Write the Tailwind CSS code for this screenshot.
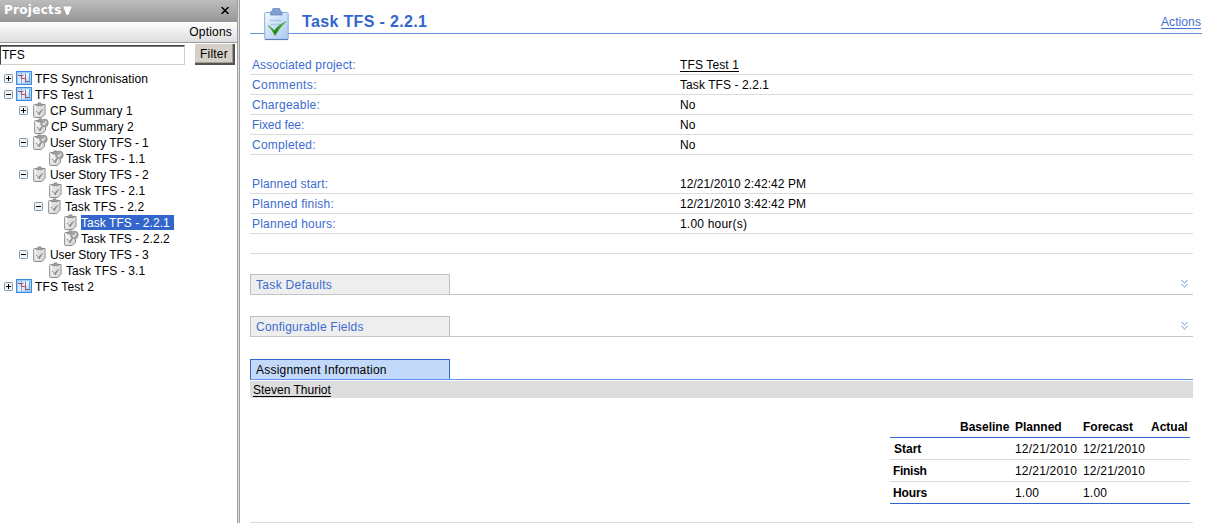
<!DOCTYPE html>
<html lang="en">
<head>
<meta charset="utf-8">
<title>Task TFS - 2.2.1</title>
<script src="https://cdn.jsdelivr.net/npm/@tailwindcss/browser@4"></script>
</head>
<body class="h-[523px] w-[1224px] overflow-hidden bg-white text-black text-[12px] leading-4 font-['Liberation_Sans',Arial,sans-serif]">
<svg width="0" height="0" class="absolute">
  <defs>
    <linearGradient id="pg" x1="0" y1="0" x2="1" y2="1"><stop offset="0" stop-color="#a3cdf9"/><stop offset=".5" stop-color="#eaf4ff"/><stop offset="1" stop-color="#7fb8f5"/></linearGradient>
    <linearGradient id="cg" x1="0" y1="0" x2="1" y2="1"><stop offset="0" stop-color="#fff"/><stop offset="1" stop-color="#cfcfcf"/></linearGradient>
    <linearGradient id="bg" x1="0" y1="0" x2="1" y2="1"><stop offset="0" stop-color="#f2f8fe"/><stop offset="1" stop-color="#a9c8ee"/></linearGradient>
    <linearGradient id="tg" x1="0" y1="0" x2="1" y2="0"><stop offset="0" stop-color="#7ecb4c"/><stop offset=".4" stop-color="#1f7f1c"/><stop offset="1" stop-color="#66c23c"/></linearGradient>
    <symbol id="plus" viewBox="0 0 9 9"><rect x=".5" y=".5" width="8" height="8" rx=".8" fill="#f3f2ee" stroke="#7b9ab5"/><path d="M2 4.5h5M4.5 2v5" stroke="#000"/></symbol>
    <symbol id="minus" viewBox="0 0 9 9"><rect x=".5" y=".5" width="8" height="8" rx=".8" fill="#f3f2ee" stroke="#7b9ab5"/><path d="M2 4.5h5" stroke="#000"/></symbol>
    <symbol id="proj" viewBox="0 0 16 14"><rect x=".5" y=".5" width="15" height="13" fill="url(#pg)" stroke="#3f8ade"/><rect x="1.500" y="1.500" width="13" height="11" fill="none" stroke="#9fcbf8"/><path d="M5.500 2v10M9.500 2v10M13.500 2v10" stroke="#6aa6ec"/><path d="M2 4.500h3.500v3H9.500v3H13" fill="none" stroke="#b04a48"/><path d="M9.500 4v3M6 4.500h1.500" stroke="#c0524c" stroke-width=".8"/></symbol>
    <symbol id="clip" viewBox="0 0 13 16"><path d="M1.500 2.500h10.500v9.800l-3.200 3.200H1.500q-.8 0-.8-.8V3.300q0-.8.8-.8z" fill="url(#cg)" stroke="#8b8b8b"/><path d="M3.200 4V2.200h1.500L5.200.8h2.600l.5 1.400h1.500V4z" fill="#9b9b9b" stroke="#888" stroke-width=".6"/><path d="M3.500 6.500h6M3.500 8.500h5" stroke="#d2d2d2"/><path d="M3 9q2 1 2.700 2.600Q7 8.800 10 7.300 7.800 10 6.200 13 5 10.700 3 9z" fill="#808080" stroke="#8b8b8b" stroke-width=".6"/></symbol>
    <symbol id="clipdone" viewBox="0 0 15 16"><path d="M1.500 2.500h10v9.800l-3.200 3.200H1.500q-.8 0-.8-.8V3.300q0-.8.8-.8z" fill="url(#cg)" stroke="#8b8b8b"/><path d="M3 4V2.200H4.500L5 .8h2.500l.5 1.400h1.500V4z" fill="#9b9b9b" stroke="#888" stroke-width=".6"/><path d="M2.800 9q2 1 2.700 2.600Q6.800 8.800 9.800 7.300 7.600 10 6 13 4.800 10.700 2.800 9z" fill="#808080" stroke="#8b8b8b" stroke-width=".6"/><circle cx="10.400" cy="4.900" r="3.900" fill="#a3a3a3" stroke="#929292" stroke-width=".7"/><path d="M8.600 5.100l1.400 1.500 2.200-3.200" fill="none" stroke="#f0f0f0" stroke-width="1.200"/></symbol>
    <symbol id="more" viewBox="0 0 7 8" shape-rendering="crispEdges"><path d="M0 0h2v1H0zM5 0h2v1H5zM1 1h2v1H1zM4 1h2v1H4zM2 2h3v1H2zM3 3h1v1H3zM0 4h2v1H0zM5 4h2v1H5zM1 5h2v1H1zM4 5h2v1H4zM2 6h3v1H2zM3 7h1v1H3z" fill="#b3c8f0"/></symbol>
  </defs>
</svg>
<div class="flex h-full">
  <aside class="w-[237px] shrink-0">
    <header class="flex h-[22px] items-start justify-between bg-gradient-to-b from-[#bdbdbd] to-[#969696] pl-1 pr-[8px] text-white">
      <h2 class="flex items-center pt-[2px] font-['DejaVu_Sans',Verdana,sans-serif] text-[12px] font-bold tracking-[0.3px]">Projects<svg class="ml-px" width="9" height="9" viewBox="0 0 9 9"><path d="M.3.500h8.400L5.500 8.700h-2z" fill="#fff"/></svg></h2>
      <svg class="mt-[7px]" width="8" height="7" viewBox="0 0 8 7"><path d="M.5 0l7 7M7.500 0l-7 7" stroke="#000" stroke-width="1.500"/></svg>
    </header>
    <div class="flex h-[21px] justify-end border-b border-[#9c9c9c] bg-gradient-to-b from-[#fdfdfd] to-[#dedede] pr-[5px] pt-[2px]"><span class="tracking-[0.2px]">Options</span></div>
    <div class="flex h-[27px] justify-between pr-[2px] pt-px">
      <div class="mt-px h-[20px] w-[185px] border border-b-[#d4d0c8] border-l-[#404040] border-r-[#d4d0c8] border-t-[#404040] pl-px pt-px shadow-[inset_0_1px_0_#808080]">TFS</div>
      <button class="h-[21px] w-[40px] border-b-2 border-r-2 border-b-[#55534f] border-r-[#55534f] bg-[#d4d0c8] text-[12px] leading-[18px] tracking-[0.2px] shadow-[inset_-1px_-1px_0_#a09d97]">Filter</button>
    </div>
    <ul>
      <li class="flex h-4 items-center pl-1"><svg width="9" height="9"><use href="#plus"/></svg><svg class="ml-[3px]" width="16" height="14"><use href="#proj"/></svg><span class="ml-[3px] pt-[2px] tracking-[0.08px]">TFS Synchronisation</span></li>
      <li class="flex h-4 items-center pl-1"><svg width="9" height="9"><use href="#minus"/></svg><svg class="ml-[3px]" width="16" height="14"><use href="#proj"/></svg><span class="ml-[3px] pt-[2px] tracking-[0.1px]">TFS Test 1</span></li>
      <li class="flex h-4 items-center pl-[19px]"><svg width="9" height="9"><use href="#plus"/></svg><svg class="ml-[5px]" width="13" height="16"><use href="#clip"/></svg><span class="ml-[4px] pt-[2px] tracking-[0.15px]">CP Summary 1</span></li>
      <li class="flex h-4 items-center pl-[34px]"><svg width="15" height="16"><use href="#clipdone"/></svg><span class="ml-[2px] pt-[2px] tracking-[0.15px]">CP Summary 2</span></li>
      <li class="flex h-4 items-center pl-[19px]"><svg width="9" height="9"><use href="#minus"/></svg><svg class="ml-[5px]" width="15" height="16"><use href="#clipdone"/></svg><span class="ml-[2px] pt-[2px] tracking-[-0.06px]">User Story TFS - 1</span></li>
      <li class="flex h-4 items-center pl-[49px]"><svg width="15" height="16"><use href="#clipdone"/></svg><span class="ml-[2px] pt-[2px] tracking-[0.1px]">Task TFS - 1.1</span></li>
      <li class="flex h-4 items-center pl-[19px]"><svg width="9" height="9"><use href="#minus"/></svg><svg class="ml-[5px]" width="13" height="16"><use href="#clip"/></svg><span class="ml-[4px] pt-[2px] tracking-[-0.06px]">User Story TFS - 2</span></li>
      <li class="flex h-4 items-center pl-[49px]"><svg width="13" height="16"><use href="#clip"/></svg><span class="ml-[4px] pt-[2px] tracking-[0.1px]">Task TFS - 2.1</span></li>
      <li class="flex h-4 items-center pl-[34px]"><svg width="9" height="9"><use href="#minus"/></svg><svg class="ml-[5px]" width="13" height="16"><use href="#clip"/></svg><span class="ml-[4px] pt-[2px] tracking-[0.1px]">Task TFS - 2.2</span></li>
      <li class="flex h-4 items-center pl-[64px]"><svg width="13" height="16"><use href="#clip"/></svg><span class="ml-[4px] h-[15px] w-[93px] bg-[#3366cc] leading-4 tracking-[0.06px] text-white">Task TFS - 2.2.1</span></li>
      <li class="flex h-4 items-center pl-[64px]"><svg width="15" height="16"><use href="#clipdone"/></svg><span class="ml-[2px] pt-[2px] tracking-[0.06px]">Task TFS - 2.2.2</span></li>
      <li class="flex h-4 items-center pl-[19px]"><svg width="9" height="9"><use href="#minus"/></svg><svg class="ml-[5px]" width="13" height="16"><use href="#clip"/></svg><span class="ml-[4px] pt-[2px] tracking-[-0.06px]">User Story TFS - 3</span></li>
      <li class="flex h-4 items-center pl-[49px]"><svg width="13" height="16"><use href="#clip"/></svg><span class="ml-[4px] pt-[2px] tracking-[0.1px]">Task TFS - 3.1</span></li>
      <li class="flex h-4 items-center pl-1"><svg width="9" height="9"><use href="#plus"/></svg><svg class="ml-[3px]" width="16" height="14"><use href="#proj"/></svg><span class="ml-[3px] pt-[2px] tracking-[0.12px]">TFS Test 2</span></li>
    </ul>
  </aside>
  <div class="w-[3px] shrink-0 border-x border-[#a0a0a0] bg-[#dedede]"></div>
  <main class="w-[962px] shrink-0 pl-[10px]">
    <header class="relative flex h-[34px] items-start border-b border-[#6b93dd]">
      <svg class="absolute left-[14px] top-[8px]" width="25" height="33" viewBox="0 0 25 33">
        <rect x=".7" y="4.500" width="23.500" height="27" rx="1" fill="url(#bg)" stroke="#8aadde"/>
        <path d="M1 31.500h23" stroke="#5a7db8" stroke-width="1.200"/>
        <path d="M6.500 7V4.200q0-1 1-1h1V1.500q0-1 1-1h5.500q1 0 1 1v1.700h1q1 0 1 1V7z" fill="#809fd0" stroke="#6b8cc2" stroke-width=".8"/>
        <path d="M6 12.500h12M6 16.500h12" stroke="#a4c8ee" stroke-width="1.500"/>
        <path d="M4 17.500q3.500 2 6.200 5Q14.500 17 21.800 13.500 15 20 11 27.500 8 21.500 4 17.500z" fill="url(#tg)" stroke="#3b9a2c" stroke-width=".6"/>
      </svg>
      <h1 class="ml-[52px] mt-[12px] text-[16px] font-bold leading-[20px] tracking-[0.35px] text-[#3366cc]">Task TFS - 2.2.1</h1>
      <a class="ml-auto mr-px mt-[14px] tracking-[0.1px] text-[#4470d0] underline underline-offset-2">Actions</a>
    </header>
    <div class="w-[943px]">
      <dl class="mt-[21px]">
        <div class="flex h-[20px] border-b border-[#dcdcdc] pl-[2px] pt-[2px]"><dt class="w-[428px] text-[#3d6bd0] tracking-[0.12px]">Associated project:</dt><dd class="tracking-[0.12px] underline underline-offset-2">TFS Test 1</dd></div>
        <div class="flex h-[20px] border-b border-[#dcdcdc] pl-[2px] pt-[2px]"><dt class="w-[428px] text-[#3d6bd0] tracking-[0.4px]">Comments:</dt><dd class="tracking-[0.08px]">Task TFS - 2.2.1</dd></div>
        <div class="flex h-[20px] border-b border-[#dcdcdc] pl-[2px] pt-[2px]"><dt class="w-[428px] text-[#3d6bd0] tracking-[0.25px]">Chargeable:</dt><dd>No</dd></div>
        <div class="flex h-[20px] border-b border-[#dcdcdc] pl-[2px] pt-[2px]"><dt class="w-[428px] text-[#3d6bd0] tracking-[-0.05px]">Fixed fee:</dt><dd>No</dd></div>
        <div class="flex h-[20px] border-b border-[#dcdcdc] pl-[2px] pt-[2px]"><dt class="w-[428px] text-[#3d6bd0] tracking-[0.25px]">Completed:</dt><dd>No</dd></div>
      </dl>
      <dl class="mt-[19px]">
        <div class="flex h-[20px] border-b border-[#dcdcdc] pl-[2px] pt-[2px]"><dt class="w-[428px] text-[#3d6bd0] tracking-[0.15px]">Planned start:</dt><dd class="tracking-[0.06px]">12/21/2010 2:42:42 PM</dd></div>
        <div class="flex h-[20px] border-b border-[#dcdcdc] pl-[2px] pt-[2px]"><dt class="w-[428px] text-[#3d6bd0] tracking-[0.22px]">Planned finish:</dt><dd class="tracking-[0.06px]">12/21/2010 3:42:42 PM</dd></div>
        <div class="flex h-[20px] border-b border-[#dcdcdc] pl-[2px] pt-[2px]"><dt class="w-[428px] text-[#3d6bd0] tracking-[0.22px]">Planned hours:</dt><dd class="tracking-[0.2px]">1.00 hour(s)</dd></div>
        <div class="h-[20px] border-b border-[#dcdcdc]"></div>
      </dl>
      <section class="mt-[20px] flex h-[21px] items-start justify-between border-b border-[#c4c4c4]">
        <h3 class="h-[20px] w-[200px] border border-b-0 border-[#c0c0c0] bg-[#eeeeee] pl-[5px] pt-[2px] tracking-[0.32px] text-[#3d6bd0]">Task Defaults</h3>
        <svg class="mr-[5px] mt-[6px]" width="7" height="8"><use href="#more"/></svg>
      </section>
      <section class="mt-[21px] flex h-[21px] items-start justify-between border-b border-[#c4c4c4]">
        <h3 class="h-[20px] w-[200px] border border-b-0 border-[#c0c0c0] bg-[#eeeeee] pl-[5px] pt-[2px] tracking-[0.23px] text-[#3d6bd0]">Configurable Fields</h3>
        <svg class="mr-[5px] mt-[6px]" width="7" height="8"><use href="#more"/></svg>
      </section>
      <section class="mt-[22px]">
        <div class="h-[21px] border-b border-[#6495e6]"><h3 class="h-[20px] w-[200px] border border-b-0 border-[#3366cc] bg-[#c3d9fa] pl-[5px] pt-[2px] tracking-[0.21px]">Assignment Information</h3></div>
        <div class="mt-px h-[17px] bg-[#dddddd] pl-[3px] pt-px leading-[16px]"><a class="underline underline-offset-2">Steven Thuriot</a></div>
      </section>
      <div class="flex h-[125px] justify-end border-b border-[#dcdcdc] pr-[3px] pt-[18px]">
        <div class="w-[300px]">
          <div class="grid h-[22px] grid-cols-[70px_55px_68px_68px_39px] border-b border-[#3366cc] pt-[3px] font-bold"><span></span><span>Baseline</span><span>Planned</span><span>Forecast</span><span>Actual</span></div>
          <div class="grid h-[22px] grid-cols-[70px_55px_68px_68px_39px] border-b border-[#dcdcdc] pt-[3px]"><span class="pl-[4px] font-bold">Start</span><span></span><span class="tracking-[0.2px]">12/21/2010</span><span class="tracking-[0.2px]">12/21/2010</span></div>
          <div class="grid h-[22px] grid-cols-[70px_55px_68px_68px_39px] border-b border-[#dcdcdc] pt-[3px]"><span class="pl-[3px] font-bold tracking-[-0.3px]">Finish</span><span></span><span class="tracking-[0.2px]">12/21/2010</span><span class="tracking-[0.2px]">12/21/2010</span></div>
          <div class="grid h-[22px] grid-cols-[70px_55px_68px_68px_39px] border-b border-[#3366cc] pt-[3px]"><span class="pl-[3px] font-bold tracking-[-0.1px]">Hours</span><span></span><span class="tracking-[0.2px]">1.00</span><span class="tracking-[0.2px]">1.00</span></div>
        </div>
      </div>
    </div>
  </main>
</div>
</body>
</html>
